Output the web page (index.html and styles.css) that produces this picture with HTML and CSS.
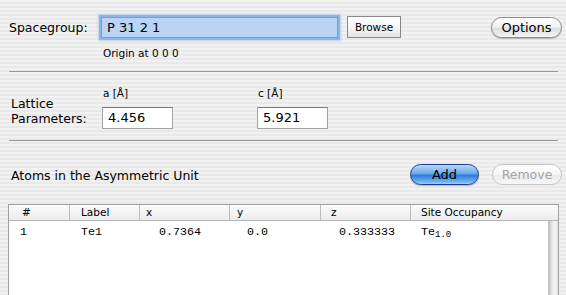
FILE: index.html
```html
<!DOCTYPE html>
<html lang="en">
<head>
    <meta charset="UTF-8">
    <title>Crystal Structure</title>
    <link rel="stylesheet" href="styles.css">
</head>
<body>
    <div class="window">
        <div class="sg-row">
            <label class="sg-label">Spacegroup:</label>
            <div class="sg-field">P 31 2 1</div>
            <button class="square-btn">Browse</button>
            <button class="pill-btn options">Options</button>
        </div>
        <div class="origin">Origin at 0 0 0</div>
        <div class="sep"></div>

        <div class="lattice">
            <div class="lat-label">Lattice<br>Parameters:</div>
            <div class="param">
                <span class="param-name">a [Å]</span>
                <div class="num-field">4.456</div>
            </div>
            <div class="param">
                <span class="param-name">c [Å]</span>
                <div class="num-field">5.921</div>
            </div>
        </div>
        <div class="sep"></div>

        <div class="atoms-head">
            <span class="atoms-title">Atoms in the Asymmetric Unit</span>
            <button class="pill-btn add">Add</button>
            <button class="pill-btn remove" disabled>Remove</button>
        </div>

        <div class="table">
            <div class="thead">
                <div class="c c-num">#</div>
                <div class="c c-label">Label</div>
                <div class="c c-x">x</div>
                <div class="c c-y">y</div>
                <div class="c c-z">z</div>
                <div class="c c-occ">Site Occupancy</div>
            </div>
            <div class="tbody">
                <div class="rows">
                    <div class="trow">
                        <div class="c c-num">1</div>
                        <div class="c c-label">Te1</div>
                        <div class="c c-x">0.7364</div>
                        <div class="c c-y">0.0</div>
                        <div class="c c-z">0.333333</div>
                        <div class="c c-occ">Te<sub>1.0</sub></div>
                    </div>
                </div>
                <div class="scrollbar"></div>
            </div>
        </div>
    </div>
</body>
</html>
```

FILE: styles.css
```css
html, body {
    margin: 0;
    height: 100%;
    overflow: hidden;
}
body {
    font-family: "DejaVu Sans", sans-serif;
    color: #000;
    background: repeating-linear-gradient(to bottom, #f1f1f1 0, #f1f1f1 2px, #e9e9e9 2px, #e9e9e9 4px);
}
.window {
    padding: 0 4px 0 8px;
}
button {
    font-family: "DejaVu Sans", sans-serif;
    padding: 0;
    cursor: default;
}

/* spacegroup row */
.sg-row {
    display: flex;
    align-items: center;
    padding-top: 15px;
    height: 24px;
}
.sg-label {
    width: 92px;
    font-size: 12.5px;
    padding-left: 1px;
}
.sg-field {
    width: 230px;
    height: 19px;
    line-height: 19px;
    padding-left: 5px;
    font-size: 13px;
    background: #b9d4f5;
    border: 1px solid #7d9ccb;
    box-shadow: 0 0 0 2px #8fb4e6, 0 0 2px 3px #b8d0ef;
}
.square-btn {
    margin-left: 9px;
    width: 54px;
    height: 22px;
    font-size: 10.5px;
    border: 1px solid #8a8a8a;
    background: linear-gradient(#ffffff, #f3f3f3 60%, #e4e4e4);
}
.pill-btn {
    height: 21px;
    border-radius: 11px;
    font-size: 12.5px;
    border: 1px solid #8d8d8d;
    background: linear-gradient(#ffffff, #f2f2f2 45%, #dedede 55%, #f4f4f4);
    box-shadow: 0 1px 1px rgba(0, 0, 0, 0.25);
}
.options {
    margin-left: auto;
    width: 71px;
    font-size: 13px;
}
.origin {
    padding-left: 95px;
    margin-top: 8px;
    font-size: 10.5px;
    height: 13px;
}
.sep {
    height: 1px;
    background: #979797;
    margin-top: 11px;
    margin-right: 4px;
    margin-left: 1px;
}

/* lattice */
.lattice {
    display: flex;
    align-items: flex-end;
    height: 57px;
}
.lat-label {
    box-sizing: border-box;
    width: 94px;
    padding-left: 3px;
    font-size: 12.5px;
    line-height: 15px;
    padding-bottom: 1px;
    margin-bottom: 2px;
}
.param {
    display: flex;
    flex-direction: column;
    width: 155px;
}
.param-name {
    font-size: 10.5px;
    padding-left: 1px;
    margin-bottom: 8px;
}
.num-field {
    width: 64px;
    height: 20px;
    line-height: 20px;
    padding-left: 5px;
    font-size: 13px;
    background: #fff;
    border: 1px solid #a3a3a3;
    border-top-color: #7b7b7b;
}

/* atoms section */
.atoms-head {
    display: flex;
    align-items: center;
    margin-top: 22px;
    height: 22px;
}
.atoms-title {
    font-size: 12.5px;
    padding-left: 3px;
    padding-top: 2px;
}
.add {
    margin-left: auto;
    width: 69px;
    font-size: 13px;
    color: #000;
    border: 1px solid #1e3f8c;
    background: linear-gradient(#bcd8f6, #6aa8ea 45%, #2f7ddc 55%, #74b6f3 90%, #a7d3fb);
}
.remove {
    margin-left: 13px;
    width: 70px;
    color: #a3a3a3;
    border-color: #c4c4c4;
    background: linear-gradient(#ffffff, #f6f6f6 50%, #ececec 55%, #f7f7f7);
    box-shadow: none;
}

/* table */
.table {
    margin-top: 19px;
    border: 1px solid #a0a0a0;
    border-bottom: none;
    margin-right: 3px;
    height: 100px;
    display: flex;
    flex-direction: column;
}
.thead {
    display: flex;
    height: 15px;
    line-height: 15px;
    font-size: 10.5px;
    background: linear-gradient(#fbfbfb, #ececec);
    border-bottom: 1px solid #b5b5b5;
}
.thead .c {
    border-right: 1px solid #bdbdbd;
}
.thead .c-occ {
    flex: 1;
    border-right: none;
}
.c {
    box-sizing: border-box;
    white-space: nowrap;
}
.c-num { width: 61px; padding-left: 13px; }
.c-label { width: 70px; padding-left: 11px; }
.c-x { width: 90px; padding-left: 6px; }
.c-y { width: 91px; padding-left: 7px; }
.c-z { width: 90px; padding-left: 10px; }
.c-occ { width: 137px; padding-left: 10px; }

.tbody {
    flex: 1;
    display: flex;
    background: #fff;
}
.rows {
    flex: 1;
}
.trow {
    display: flex;
    height: 17px;
    line-height: 17px;
    padding-top: 3px;
    font-family: "Liberation Mono", monospace;
    font-size: 11.7px;
}
.trow .c-num { padding-left: 11px; }
.trow .c-x { padding-left: 19px; }
.trow .c-y { padding-left: 17px; }
.trow .c-z { padding-left: 18px; }
.trow .c-occ { padding-left: 10px; }
.trow sub {
    font-size: 9px;
    vertical-align: -2px;
}
.scrollbar {
    width: 15px;
    background: linear-gradient(to right, #bdbdbd, #e3e3e3 30%, #f4f4f4 60%, #e6e6e6);
    border-left: 1px solid #c6c6c6;
}
```
